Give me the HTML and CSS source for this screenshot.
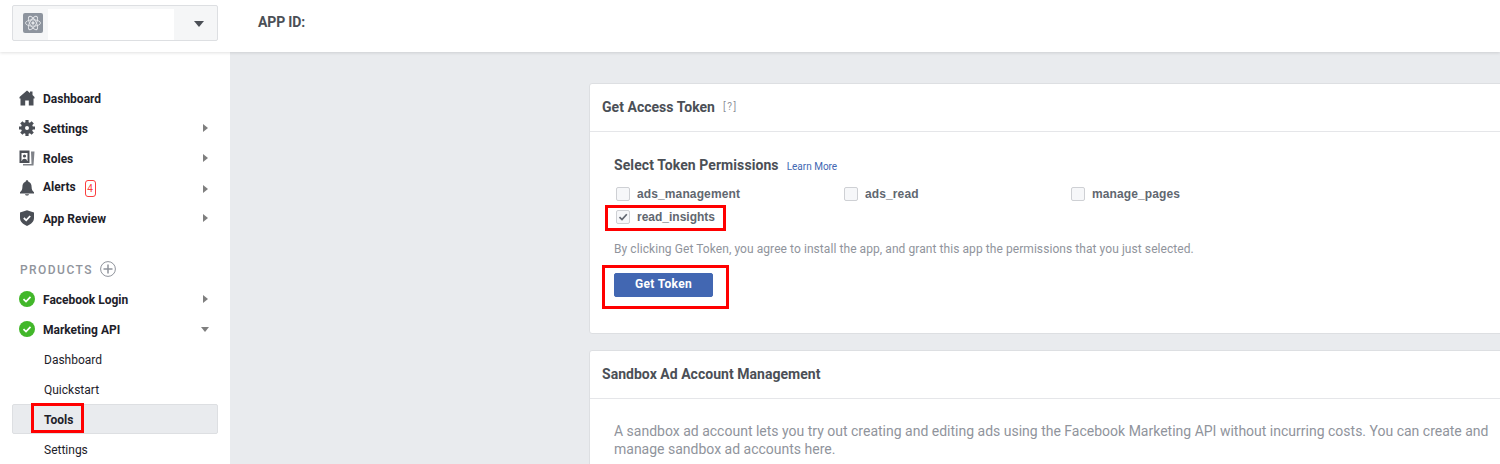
FILE: index.html
```html
<!DOCTYPE html>
<html lang="en">
<head>
  <meta charset="UTF-8">
  <title>App Dashboard</title>
  <link rel="stylesheet" href="styles.css">
</head>
<body>
  <!-- Top bar -->
  <header class="topbar">
    <div class="app-select">
      <span class="app-icon">
        <svg width="20" height="20" viewBox="0 0 20 20" fill="none" stroke="#e4e6ea" stroke-width="0.9">
          <ellipse cx="10" cy="10" rx="7.5" ry="3.2"/>
          <ellipse cx="10" cy="10" rx="7.5" ry="3.2" transform="rotate(60 10 10)"/>
          <ellipse cx="10" cy="10" rx="7.5" ry="3.2" transform="rotate(120 10 10)"/>
          <circle cx="10" cy="10" r="1.2" fill="#e4e6ea"/>
        </svg>
      </span>
      <span class="app-name"></span>
      <span class="app-caret"></span>
    </div>
    <div class="app-id">APP ID:</div>
  </header>

  <div class="layout">
    <!-- Left menu -->
    <nav class="sidebar">
      <a class="nav-row">
        <svg class="nav-icon" viewBox="0 0 16 16" fill="#4b4f56"><path d="M8 0.5 L11 3 V1.5 H13.5 V5 L15.5 7 V8.5 H14.5 V15.5 H9.8 V10.5 H6.2 V15.5 H1.5 V8.5 H0.5 V7 Z"/></svg>
        <span class="nav-label">Dashboard</span>
      </a>
      <a class="nav-row">
        <svg class="nav-icon" viewBox="0 0 16 16"><circle cx="8" cy="8" r="4" fill="none" stroke="#4b4f56" stroke-width="4"/><path stroke="#4b4f56" stroke-width="3.2" d="M8 0V3M8 13V16M0 8H3M13 8H16M2.3 2.3L4.5 4.5M11.5 11.5L13.7 13.7M13.7 2.3L11.5 4.5M4.5 11.5L2.3 13.7"/></svg>
        <span class="nav-label">Settings</span>
        <span class="arrow-right"></span>
      </a>
      <a class="nav-row">
        <svg class="nav-icon" viewBox="0 0 16 16" fill="#4b4f56"><path fill-rule="evenodd" d="M0.5 0.5H10.5V13H0.5ZM2.5 3V11H8.5V3Z"/><circle cx="5.5" cy="6" r="1.6"/><path d="M3 11 C3 8 8 8 8 11Z"/><path d="M12 1.5H15.5L14.5 15.5H4V14H12.5Z" fill="#7f8288"/></svg>
        <span class="nav-label">Roles</span>
        <span class="arrow-right"></span>
      </a>
      <a class="nav-row nav-row-alerts">
        <svg class="nav-icon" viewBox="0 0 16 16" fill="#4b4f56"><path d="M8 0.2 C9 0.2 9.4 0.9 9.4 1.8 C11.8 2.5 12.6 4.6 12.6 7 C12.6 9.8 13.6 11 15 12.2 V13.4 H1 V12.2 C2.4 11 3.4 9.8 3.4 7 C3.4 4.6 4.2 2.5 6.6 1.8 C6.6 0.9 7 0.2 8 0.2Z"/><path d="M6 14.2 H10 C10 16 6 16 6 14.2Z"/></svg>
        <span class="nav-label">Alerts</span>
        <span class="alert-badge">4</span>
        <span class="arrow-right"></span>
      </a>
      <a class="nav-row">
        <svg class="nav-icon" viewBox="0 0 16 16"><path fill="#4b4f56" d="M8 0.2 L15 2.6 V8 C15 11.8 11.8 14.4 8 16 C4.2 14.4 1 11.8 1 8 V2.6 Z"/><path fill="none" stroke="#fff" stroke-width="1.8" d="M4.8 8 L7.2 10.3 L11.2 6"/></svg>
        <span class="nav-label">App Review</span>
        <span class="arrow-right"></span>
      </a>

      <div class="nav-heading">
        <span>PRODUCTS</span>
        <svg class="add-icon" width="16" height="16" viewBox="0 0 16 16" fill="none" stroke="#90949c"><circle cx="8" cy="8" r="7.4"/><path stroke-width="1.5" d="M8 3.5V12.5M3.5 8H12.5"/></svg>
      </div>

      <a class="nav-row">
        <svg class="nav-icon" viewBox="0 0 16 16"><circle cx="8" cy="8" r="8" fill="#42b72a"/><path fill="none" stroke="#fff" stroke-width="1.7" d="M4.5 8.2 L7 10.6 L11.5 5.8"/></svg>
        <span class="nav-label">Facebook Login</span>
        <span class="arrow-right"></span>
      </a>
      <a class="nav-row">
        <svg class="nav-icon" viewBox="0 0 16 16"><circle cx="8" cy="8" r="8" fill="#42b72a"/><path fill="none" stroke="#fff" stroke-width="1.7" d="M4.5 8.2 L7 10.6 L11.5 5.8"/></svg>
        <span class="nav-label">Marketing API</span>
        <span class="arrow-down"></span>
      </a>
      <a class="sub-row">Dashboard</a>
      <a class="sub-row">Quickstart</a>
      <a class="sub-row sub-row-active"><span class="mark mark-tools"></span>Tools</a>
      <a class="sub-row">Settings</a>
    </nav>

    <!-- Content -->
    <main class="content">
      <section class="card">
        <div class="card-head">
          <h2>Get Access Token</h2>
          <span class="help">[?]</span>
        </div>
        <div class="card-body token-body">
          <div class="perm-title">
            <h3>Select Token Permissions</h3>
            <a class="learn-more">Learn More</a>
          </div>
          <div class="perm-grid">
            <label class="perm"><span class="check"></span>ads_management</label>
            <label class="perm"><span class="check"></span>ads_read</label>
            <label class="perm"><span class="check"></span>manage_pages</label>
            <label class="perm perm-marked">
              <span class="mark mark-insights"></span>
              <span class="check">
                <svg width="12" height="12" viewBox="0 0 12 12" fill="none" stroke="#616770" stroke-width="1.7"><path d="M2.5 6.2 L5 8.6 L9.8 3.2"/></svg>
              </span>read_insights
            </label>
          </div>
          <p class="agree">By clicking Get Token, you agree to install the app, and grant this app the permissions that you just selected.</p>
          <div class="btn-wrap">
            <span class="mark mark-button"></span>
            <button class="btn-primary">Get Token</button>
          </div>
        </div>
      </section>

      <section class="card">
        <div class="card-head">
          <h2>Sandbox Ad Account Management</h2>
        </div>
        <div class="card-body sandbox-body">
          <p class="sandbox-text">A sandbox ad account lets you try out creating and editing ads using the Facebook Marketing API without incurring costs. You can create and manage sandbox ad accounts here.</p>
        </div>
      </section>
    </main>
  </div>
</body>
</html>
```

FILE: styles.css
```css
* {
  box-sizing: border-box;
}

html, body {
  height: 100%;
}

body {
  margin: 0;
  overflow: hidden;
  font-family: Roboto, "Liberation Sans", sans-serif;
  background: #e9ebee;
  color: #1d2129;
}

/* Top bar */
.topbar {
  position: relative;
  z-index: 2;
  display: flex;
  align-items: center;
  height: 52px;
  padding: 0 0 8px 12px;
  background: #fff;
  box-shadow: 0 1px 3px rgba(0, 0, 0, 0.12);
}

.app-select {
  display: flex;
  width: 206px;
  height: 36px;
  margin-top: 2px;
  background: #f5f6f7;
  border: 1px solid #dddfe2;
  border-radius: 2px;
}

.app-icon {
  display: flex;
  align-items: center;
  justify-content: center;
  width: 20px;
  height: 20px;
  margin: 7px 5px 0 10px;
  background: #8d949e;
  border-radius: 2px;
}

.app-name {
  width: 126px;
  margin-top: 3px;
  background: #fff;
}

.app-caret {
  width: 0;
  height: 0;
  margin: 15px 0 0 20px;
  border-top: 6px solid #4b4f56;
  border-left: 5px solid transparent;
  border-right: 5px solid transparent;
}

.app-id {
  margin-left: 40px;
  font-size: 14px;
  font-weight: 700;
  letter-spacing: -0.15px;
  color: #4b4f56;
}

.layout {
  display: flex;
  height: 412px;
}

/* Left menu */
.sidebar {
  flex: none;
  width: 230px;
  padding: 32px 12px 0;
  background: #fff;
}

.nav-row {
  display: flex;
  align-items: center;
  height: 30px;
  padding: 0 10px 0 7px;
}

.nav-icon {
  flex: none;
  width: 16px;
  height: 16px;
  margin: -2px 8px 0 0;
}

.nav-label {
  font-size: 12px;
  font-weight: 700;
  color: #1d2129;
}

.nav-row-alerts .nav-label {
  position: relative;
  top: -2px;
}

.alert-badge {
  width: 11px;
  height: 17px;
  margin: -2px 0 0 9px;
  border: 1px solid #fa3e3e;
  border-radius: 3px;
  font-size: 10px;
  line-height: 15px;
  text-align: center;
  color: #fa3e3e;
}

.arrow-right {
  width: 0;
  height: 0;
  margin: -2px 0 0 auto;
  border-left: 5px solid #7f7f7f;
  border-top: 4px solid transparent;
  border-bottom: 4px solid transparent;
}

.nav-row-alerts .arrow-right {
  margin-top: 0;
}

.arrow-down {
  width: 0;
  height: 0;
  margin: -2px -1px 0 auto;
  border-top: 5px solid #7f7f7f;
  border-left: 4px solid transparent;
  border-right: 4px solid transparent;
}

.nav-heading {
  display: flex;
  align-items: center;
  gap: 7px;
  height: 30px;
  margin-top: 21px;
  padding-left: 8px;
  font-size: 12px;
  font-weight: 500;
  letter-spacing: 1.45px;
  color: #90949c;
}

.add-icon {
  margin-top: -2px;
}

.sub-row {
  position: relative;
  display: block;
  height: 30px;
  padding-left: 32px;
  font-size: 12px;
  line-height: 30px;
  color: #1d2129;
}

.sub-row-active {
  margin: -1px 0 1px;
  background: #e9ebee;
  border: 1px solid #dddfe2;
  border-radius: 2px;
  padding-left: 31px;
  font-weight: 700;
  line-height: 30px;
}

/* Red annotation boxes */
.mark {
  position: absolute;
  border: 3px solid #f00;
  pointer-events: none;
}

.mark-tools {
  top: -2px;
  left: 18px;
  width: 53px;
  height: 30px;
}

.mark-insights {
  top: 0;
  left: -11px;
  width: 121px;
  height: 26px;
}

.mark-button {
  top: -8px;
  left: -12px;
  width: 127px;
  height: 44px;
}

/* Content */
.content {
  flex: 1;
  min-width: 0;
  padding: 31px 0 0 359px;
  overflow: hidden;
}

.card {
  width: 1000px;
  margin-bottom: 16px;
  background: #fff;
  border: 1px solid #dddfe2;
  border-radius: 3px;
}

.card-head {
  display: flex;
  align-items: center;
  gap: 8px;
  height: 48px;
  padding: 0 12px 2px;
  border-bottom: 1px solid #e5e6e9;
}

.card-head h2 {
  margin: 0;
  font-size: 14px;
  font-weight: 700;
  letter-spacing: 0.03px;
  color: #4b4f56;
}

.help {
  font-size: 10px;
  color: #90949c;
  letter-spacing: 1.5px;
}

.card-body {
  padding: 22px 24px 0;
}

.token-body {
  height: 201px;
  padding-top: 25px;
}

.sandbox-body {
  height: 120px;
  padding-top: 23px;
}

.perm-title {
  display: flex;
  align-items: baseline;
  gap: 8px;
}

.perm-title h3 {
  margin: 0;
  font-size: 14px;
  font-weight: 700;
  letter-spacing: 0.08px;
  color: #4b4f56;
}

.learn-more {
  font-size: 10px;
  color: #4267b2;
}

.perm-grid {
  display: grid;
  grid-template-columns: 228px 227px 1fr;
  grid-auto-rows: 23px;
  margin-top: 9px;
  padding-left: 2px;
}

.perm {
  position: relative;
  display: flex;
  align-items: center;
  gap: 7px;
  font-family: "Liberation Sans", Arial, sans-serif;
  font-size: 12px;
  font-weight: 700;
  letter-spacing: 0.12px;
  color: #616770;
}

.perm-marked {
  letter-spacing: 0;
}

.check {
  display: flex;
  align-items: center;
  justify-content: center;
  width: 14px;
  height: 14px;
  background: #f6f7f9;
  border: 1px solid #ced0d4;
  border-radius: 2px;
}

.agree {
  margin: 14px 0 0;
  font-size: 12px;
  letter-spacing: 0.07px;
  color: #90949c;
}

.btn-wrap {
  position: relative;
  margin-top: 17px;
}

.btn-primary {
  display: block;
  width: 99px;
  height: 24px;
  padding: 0 0 2px;
  background: #4267b2;
  border: 1px solid #4267b2;
  border-radius: 2px;
  font-family: inherit;
  font-size: 12px;
  font-weight: 700;
  letter-spacing: 0.35px;
  color: #fff;
}

.sandbox-text {
  margin: 0;
  width: 885px;
  font-size: 14px;
  line-height: 18px;
  color: #90949c;
}
```
